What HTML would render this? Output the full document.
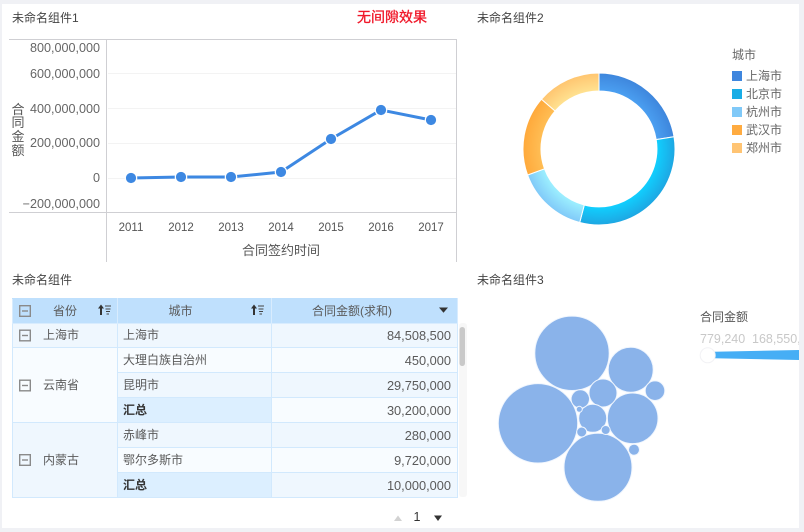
<!DOCTYPE html>
<html><head><meta charset="utf-8">
<style>
html,body{margin:0;padding:0}
body{width:804px;height:532px;overflow:hidden;background:#f0f1f5;position:relative;font-family:"Liberation Sans","Noto Sans CJK SC",sans-serif;font-size:12px;color:#555}
#bg{position:absolute;left:2px;top:4px;width:797px;height:524px;background:#fff}
svg{position:absolute;left:0;top:0}
table{position:absolute;left:12px;top:298px;width:445px;height:199px;border-collapse:collapse;table-layout:fixed}
td{border:1px solid #d2e9fd;padding:0;height:25px;line-height:23px;font-size:12px;color:#5a5a5a;box-sizing:border-box}
tr.h td{background:#bfe0fd;height:25px;text-align:center;border-color:#d8ecfe;border-top-color:#bfe0fd}
.a{background:#eff7fe}.b{background:#f8fcff}.t{background:#dcefff;font-weight:bold;color:#333}
.c2{padding-left:5px}.c3{text-align:right;padding-right:6px;font-size:12.8px}
.c1{position:relative;padding-left:30px}
</style></head><body>
<div id="bg"></div>
<table>
<colgroup><col style="width:105px"><col style="width:154px"><col style="width:186px"></colgroup>
<tr class="h"><td>省份</td><td style="padding-right:28px">城市</td><td style="padding-right:25px">合同金额(求和)</td></tr>
<tr style="height:24px"><td class="a c1" style="height:24px">上海市</td><td class="a c2" style="height:24px">上海市</td><td class="a c3" style="height:24px">84,508,500</td></tr>
<tr><td class="b c1" rowspan="3">云南省</td><td class="b c2">大理白族自治州</td><td class="b c3">450,000</td></tr>
<tr><td class="a c2">昆明市</td><td class="a c3">29,750,000</td></tr>
<tr><td class="t c2">汇总</td><td class="b c3">30,200,000</td></tr>
<tr><td class="a c1" rowspan="3">内蒙古</td><td class="a c2">赤峰市</td><td class="a c3">280,000</td></tr>
<tr><td class="b c2">鄂尔多斯市</td><td class="b c3">9,720,000</td></tr>
<tr><td class="t c2">汇总</td><td class="a c3">10,000,000</td></tr>
</table>
<svg width="804" height="532" viewBox="0 0 804 532" font-family="'Liberation Sans','Noto Sans CJK SC',sans-serif" font-size="12">
<defs>
<radialGradient id="g1" gradientUnits="userSpaceOnUse" cx="599" cy="149" r="76"><stop offset=".76" stop-color="#4ba0f2"/><stop offset="1" stop-color="#3e86dc"/></radialGradient>
<radialGradient id="g2" gradientUnits="userSpaceOnUse" cx="599" cy="149" r="76"><stop offset=".76" stop-color="#10d0ff"/><stop offset="1" stop-color="#1ea6e2"/></radialGradient>
<radialGradient id="g3" gradientUnits="userSpaceOnUse" cx="599" cy="149" r="76"><stop offset=".76" stop-color="#9df0ff"/><stop offset="1" stop-color="#80c9f8"/></radialGradient>
<radialGradient id="g4" gradientUnits="userSpaceOnUse" cx="599" cy="149" r="76"><stop offset=".76" stop-color="#ffbe55"/><stop offset="1" stop-color="#ffa93b"/></radialGradient>
<radialGradient id="g5" gradientUnits="userSpaceOnUse" cx="599" cy="149" r="76"><stop offset=".76" stop-color="#ffe291"/><stop offset="1" stop-color="#ffc570"/></radialGradient>
</defs>
<!-- titles -->
<g fill="#444">
<text x="12" y="22">未命名组件1</text>
<text x="477" y="22">未命名组件2</text>
<text x="12" y="284">未命名组件</text>
<text x="477" y="284">未命名组件3</text>
</g>
<text x="357" y="22" font-size="14" fill="#f0182a" stroke="#f0182a" stroke-width=".35">无间隙效果</text>
<!-- line chart -->
<g stroke="#f3f3f3" stroke-width="1"><path d="M108 73.5H456M108 108.5H456M108 143.5H456M108 178.5H456"/></g>
<g stroke="#cfcfd3" stroke-width="1" fill="none"><path d="M9 39.5H456.5V262M106.5 39.5V262M9 212.5H456.5"/></g>
<g fill="#666" text-anchor="end" font-size="12.6">
<text x="100" y="52">800,000,000</text>
<text x="100" y="78">600,000,000</text>
<text x="100" y="113">400,000,000</text>
<text x="100" y="147">200,000,000</text>
<text x="100" y="182">0</text>
<text x="100" y="208">−200,000,000</text>
</g>
<g fill="#555" text-anchor="middle" font-size="13">
<text x="18" y="114">合</text><text x="18" y="127">同</text><text x="18" y="141">金</text><text x="18" y="155">额</text>
<text x="281" y="255">合同签约时间</text>
</g>
<g fill="#555" text-anchor="middle" font-size="11.5">
<text x="131" y="231">2011</text><text x="181" y="231">2012</text><text x="231" y="231">2013</text><text x="281" y="231">2014</text><text x="331" y="231">2015</text><text x="381" y="231">2016</text><text x="431" y="231">2017</text>
</g>
<polyline points="131,178 181,177 231,177 281,172 331,139 381,110 431,120" fill="none" stroke="#3d88e2" stroke-width="3"/>
<g fill="#3d88e2" stroke="#fff" stroke-width="1.2">
<circle cx="131" cy="178" r="5.7"/><circle cx="181" cy="177" r="5.7"/><circle cx="231" cy="177" r="5.7"/><circle cx="281" cy="172" r="5.7"/><circle cx="331" cy="139" r="5.7"/><circle cx="381" cy="110" r="5.7"/><circle cx="431" cy="120" r="5.7"/>
</g>
<!-- donut -->
<g stroke="#fff" stroke-width="1">
<path fill="url(#g1)" d="M599 73A76 76 0 0 1 674 136.7L656.2 139.6A58 58 0 0 0 599 91Z"/>
<path fill="url(#g2)" d="M674 136.7A76 76 0 0 1 579.7 222.5L584.3 205A58 58 0 0 0 656.2 139.6Z"/>
<path fill="url(#g3)" d="M579.7 222.5A76 76 0 0 1 527.6 175L544.5 168.8A58 58 0 0 0 584.3 205Z"/>
<path fill="url(#g4)" d="M527.6 175A76 76 0 0 1 541.5 99.2L555.1 111A58 58 0 0 0 544.5 168.8Z"/>
<path fill="url(#g5)" d="M541.5 99.2A76 76 0 0 1 599 73V91A58 58 0 0 0 555.1 111Z"/>
</g>
<!-- donut legend -->
<g fill="#666">
<text x="732" y="59">城市</text>
<text x="746" y="80">上海市</text><text x="746" y="98">北京市</text><text x="746" y="116">杭州市</text><text x="746" y="134">武汉市</text><text x="746" y="152">郑州市</text>
</g>
<rect x="732" y="71" width="10" height="10" fill="#3f86de"/>
<rect x="732" y="89" width="10" height="10" fill="#19ade6"/>
<rect x="732" y="107" width="10" height="10" fill="#80c9f8"/>
<rect x="732" y="125" width="10" height="10" fill="#ffab40"/>
<rect x="732" y="143" width="10" height="10" fill="#ffc473"/>
<!-- table icons -->
<g fill="none" stroke="#8a8a8a" stroke-width="1.4">
<rect x="19.7" y="305.7" width="10.6" height="10.6"/><path d="M22 311H28"/>
<rect x="19.7" y="330.2" width="10.6" height="10.6"/><path d="M22 335.5H28"/>
<rect x="19.7" y="380.2" width="10.6" height="10.6"/><path d="M22 385.5H28"/>
<rect x="19.7" y="454.7" width="10.6" height="10.6"/><path d="M22 460H28"/>
</g>
<g fill="#333">
<path d="M101 304.5L104 308.500H102V315H100V308.500H98Z"/>
<path d="M105 306H111M105.500 309H110.500M106 311.500H110M106.500 314H109" stroke="#444" stroke-width="1" fill="none"/>
<path d="M254 304.500L257 308.500H255V315H253V308.500H251Z"/>
<path d="M258 306H264M258.500 309H263.500M259 311.500H263M259.500 314H262" stroke="#444" stroke-width="1" fill="none"/>
<path d="M439 307.500H448L443.500 312.700Z"/>
</g>
<!-- scrollbar -->
<rect x="459" y="323" width="8" height="174" rx="3" fill="#f7f7f7"/>
<rect x="459.500" y="327" width="5.500" height="39" rx="2.700" fill="#c9c9c9"/>
<!-- pagination -->
<path d="M394 521H402L398 515.500Z" fill="#d2d2d2"/>
<text x="417" y="521" text-anchor="middle" fill="#333" font-size="12.500">1</text>
<path d="M434 515.500H442L438 521Z" fill="#333"/>
<!-- bubbles -->
<g fill="#8ab3ea" stroke="#f0f6fe" stroke-width="1">
<circle cx="572" cy="353.300" r="37.200"/>
<circle cx="538" cy="423.300" r="39.700"/>
<circle cx="598" cy="467.300" r="34"/>
<circle cx="630.700" cy="369.700" r="22.500"/>
<circle cx="632.700" cy="418.300" r="25.300"/>
<circle cx="603" cy="393" r="14"/>
<circle cx="592.700" cy="418.300" r="14"/>
<circle cx="580.300" cy="399" r="9.200"/>
<circle cx="655" cy="390.700" r="9.800"/>
<circle cx="634" cy="449.700" r="5.500"/>
<circle cx="579.300" cy="409.300" r="3"/>
<circle cx="581.700" cy="432" r="5"/>
<circle cx="605.700" cy="430" r="4.500"/>
</g>
<!-- gradient legend -->
<text x="700" y="321" fill="#555">合同金额</text>
<text x="700" y="343" fill="#c8c8c8" font-size="12.500">779,240</text>
<text x="752" y="343" fill="#c8c8c8" font-size="12.500">168,550,</text>
<path d="M714 351.800L799 350V360L714 358.200Z" fill="#46aef5"/>
<circle cx="707.700" cy="355.300" r="7.500" fill="#fff" stroke="#f2f2f5" stroke-width="1"/>
<rect x="799" y="0" width="5" height="532" fill="#f0f1f5"/>
</svg>
</body></html>
